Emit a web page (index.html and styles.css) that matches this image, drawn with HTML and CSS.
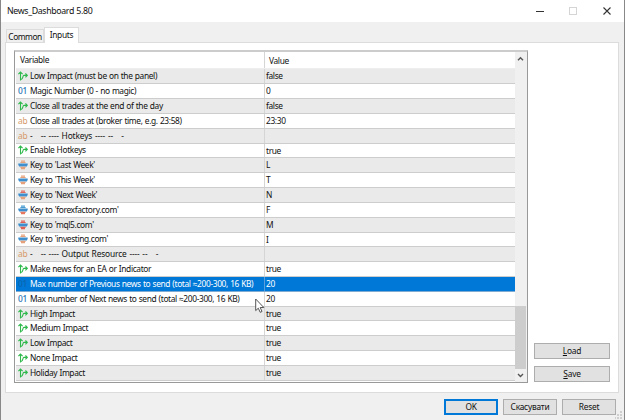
FILE: index.html
```html
<!DOCTYPE html>
<html lang="en">
<head>
  <meta charset="UTF-8">
  <meta name="viewport" content="width=device-width, initial-scale=1.0">
  <title>News_Dashboard 5.80</title>
  <link rel="stylesheet" href="styles.css">
</head>
<body>
  <svg class="defs">
    <symbol id="bool" viewBox="0 0 10 10">
      <path d="M2.5 9.5V1M.4 3.2L2.5 1.1 4.6 3.2M2.7 8.8C5.6 8.4 4.2 4.4 6 4.4H9.2M7.4 2.5L9.3 4.4 7.4 6.3" fill="none" stroke="#2fb94c" stroke-width="1.1"/>
    </symbol>
    <symbol id="enum" viewBox="0 0 10 10">
      <path class="enum-top" d="M3 1.2H7M2.4 2.5H7.6"/>
      <path class="enum-mid" d="M.3 4.5H9.7M1 5.5H9"/>
      <path class="enum-bottom" d="M2.4 7.3H7.6M3 8.6H7"/>
    </symbol>
  </svg>

  <div class="window">
    <div class="titlebar">
      <span class="title">News_Dashboard 5.80</span>
      <svg class="controls" width="80" height="10" viewBox="0 0 80 10">
        <path d="M1 5.5H9" stroke="#333"/>
        <rect x="34.5" y="1.5" width="7" height="7" fill="none" stroke="#d5d5d5"/>
        <path d="M68.5 1.5L75.5 8.5M75.5 1.5L68.5 8.5" stroke="#333" stroke-width="1.1"/>
      </svg>
    </div>

    <div class="tabs">
      <div class="tab">Common</div>
      <div class="tab active">Inputs</div>
    </div>

    <div class="page">
      <div class="list">
        <div class="rows">
          <div class="row header"><div class="name">Variable</div><div class="value">Value</div></div>
          <div class="row"><div class="name"><svg class="icon"><use href="#bool"/></svg>Low Impact (must be on the panel)</div><div class="value">false</div></div>
          <div class="row"><div class="name"><span class="icon int">01</span>Magic Number (0 - no magic)</div><div class="value">0</div></div>
          <div class="row"><div class="name"><svg class="icon"><use href="#bool"/></svg>Close all trades at the end of the day</div><div class="value">false</div></div>
          <div class="row"><div class="name"><span class="icon str">ab</span>Close all trades at (broker time, e.g. 23:58)</div><div class="value">23:30</div></div>
          <div class="row separator"><div class="name"><span class="icon str">ab</span>-&nbsp;&nbsp; -- ---- Hotkeys ---- --&nbsp;&nbsp; -</div><div class="value"></div></div>
          <div class="row"><div class="name"><svg class="icon"><use href="#bool"/></svg>Enable Hotkeys</div><div class="value">true</div></div>
          <div class="row"><div class="name"><svg class="icon"><use href="#enum"/></svg>Key to 'Last Week'</div><div class="value">L</div></div>
          <div class="row"><div class="name"><svg class="icon"><use href="#enum"/></svg>Key to 'This Week'</div><div class="value">T</div></div>
          <div class="row"><div class="name"><svg class="icon red-top"><use href="#enum"/></svg>Key to 'Next Week'</div><div class="value">N</div></div>
          <div class="row"><div class="name"><svg class="icon blue-top"><use href="#enum"/></svg>Key to 'forexfactory.com'</div><div class="value">F</div></div>
          <div class="row"><div class="name"><svg class="icon red"><use href="#enum"/></svg>Key to 'mql5.com'</div><div class="value">M</div></div>
          <div class="row"><div class="name"><svg class="icon"><use href="#enum"/></svg>Key to 'investing.com'</div><div class="value">I</div></div>
          <div class="row separator"><div class="name"><span class="icon str">ab</span>-&nbsp;&nbsp; -- ---- Output Resource ---- --&nbsp;&nbsp; -</div><div class="value"></div></div>
          <div class="row"><div class="name"><svg class="icon"><use href="#bool"/></svg>Make news for an EA or Indicator</div><div class="value">true</div></div>
          <div class="row selected"><div class="name"><span class="icon int">01</span>Max number of Previous news to send (total ≈200-300, 16 KB)</div><div class="value">20</div></div>
          <div class="row"><div class="name"><span class="icon int">01</span>Max number of Next news to send (total ≈200-300, 16 KB)</div><div class="value">20</div></div>
          <div class="row"><div class="name"><svg class="icon"><use href="#bool"/></svg>High Impact</div><div class="value">true</div></div>
          <div class="row"><div class="name"><svg class="icon"><use href="#bool"/></svg>Medium Impact</div><div class="value">true</div></div>
          <div class="row"><div class="name"><svg class="icon"><use href="#bool"/></svg>Low Impact</div><div class="value">true</div></div>
          <div class="row"><div class="name"><svg class="icon"><use href="#bool"/></svg>None Impact</div><div class="value">true</div></div>
          <div class="row"><div class="name"><svg class="icon"><use href="#bool"/></svg>Holiday Impact</div><div class="value">true</div></div>
        </div>
        <div class="scrollbar">
          <svg width="11" height="14" viewBox="0 0 11 14"><path d="M3 8.3L5.5 5.8 8 8.3" fill="none" stroke="#555" stroke-width="1.4"/></svg>
          <div class="thumb"></div>
          <svg width="11" height="13" viewBox="0 0 11 13"><path d="M3 5L5.5 7.5 8 5" fill="none" stroke="#555" stroke-width="1.4"/></svg>
        </div>
      </div>

      <div class="side">
        <button class="wide"><u>L</u>oad</button>
        <button class="wide"><u>S</u>ave</button>
      </div>
    </div>

    <div class="footer">
      <button class="default">OK</button>
      <button>Скасувати</button>
      <button>Reset</button>
    </div>

    <svg class="grip" width="8" height="8"><path d="M5 1h2M5 4h2M2 4h2M5 7h2M2 7h2M-1 7h2" stroke="#c4c4c4" stroke-width="1.5"/></svg>
    <svg class="cursor" width="10" height="16" viewBox="0 0 10 16"><path d="M.7 1V12.6L3.3 10.2 5.2 14.3 7 13.5 5.2 9.5H8.8Z" fill="#fff" stroke="#444" stroke-width=".9"/></svg>
  </div>
</body>
</html>
```
FILE: styles.css
```css
* {
    box-sizing: border-box;
}

body {
    margin: 0;
    font-family: "Noto Sans", sans-serif;
    font-size: 8.4px;
    letter-spacing: -0.36px;
    word-spacing: 0.4px;
    color: #111;
    overflow: hidden;
}

.defs {
    display: none;
}

.window {
    position: relative;
    width: 625px;
    height: 420px;
    background: #f0f0f0;
    border-left: 1px solid #888;
    border-right: 1px solid #888;
}

.titlebar {
    display: flex;
    justify-content: space-between;
    align-items: center;
    height: 22px;
    padding: 0 9px 0 6px;
    background: #fff;
}

.title {
    font-size: 8.8px;
}

.tabs {
    display: flex;
    align-items: flex-end;
    height: 21px;
    padding-left: 5px;
}

.tab {
    width: 38px;
    height: 14px;
    line-height: 14px;
    text-align: center;
    letter-spacing: -0.5px;
    border: 1px solid #dcdcdc;
    border-bottom: none;
}

.tab.active {
    width: 35px;
    height: 16px;
    background: #fff;
    letter-spacing: -0.29px;
}

.page {
    display: flex;
    justify-content: space-between;
    width: 614px;
    height: 351px;
    margin: -1px 0 0 4px;
    padding: 7px 8px 10px;
    background: #fff;
    border: 1px solid #dcdcdc;
}

.list {
    display: flex;
    width: 514px;
    height: 333px;
    border: 1px solid #999;
    border-top: 2px solid #ccc;
}

.rows {
    width: 500px;
    padding-left: 1px;
}

.row {
    display: flex;
    height: 14.83px;
    line-height: 14px;
    border-bottom: 1px solid #cdcdcd;
    white-space: pre;
}

.row:nth-child(even) {
    background: #eaeaea;
}

.row.header {
    height: 17.4px;
    line-height: 18px;
    border-bottom: 1px solid #eee;
}

.row.separator .name {
    letter-spacing: -0.14px;
    word-spacing: 0.7px;
}

.row.selected {
    background: #0078d7;
    border-bottom-color: #7fabd2;
    color: #fff;
}

.name {
    display: flex;
    align-items: center;
    width: 249px;
    padding-left: 2px;
    border-right: 1px solid #d5d5d5;
}

.selected .name {
    border-right-color: #5a9fdc;
}

.value {
    padding-left: 1px;
}

.header .name,
.header .value {
    padding-left: 4px;
}

.icon {
    flex: none;
    width: 10px;
    height: 10px;
    margin-right: 2px;
    line-height: 9px;
    letter-spacing: -0.2px;
}

.int {
    color: #2675b5;
    font-weight: 500;
}

.selected .int {
    color: #0b66ae;
}

.str {
    color: #d69a69;
}

.enum-top,
.enum-bottom {
    stroke: var(--bottom, #e5a17c);
    stroke-width: 1.2;
}

.enum-top {
    stroke: var(--top, #e5a17c);
}

.enum-mid {
    stroke: #3f8fce;
    stroke-width: 1.8;
}

.red-top {
    --top: #df6a60;
}

.blue-top {
    --top: #4b9bd0;
    --bottom: #e5785f;
}

.red {
    --top: #df5f55;
    --bottom: #df5f55;
}

.scrollbar {
    display: flex;
    flex-direction: column;
    width: 12px;
    padding-right: 1px;
    background: #f0f0f0;
}

.thumb {
    height: 63px;
    margin-top: auto;
    background: #cdcdcd;
}

.side {
    display: flex;
    flex-direction: column;
    justify-content: flex-end;
    gap: 7px;
}

button {
    width: 54px;
    height: 16px;
    padding: 0;
    font: inherit;
    letter-spacing: -0.25px;
    color: #111;
    line-height: 14px;
    background: #e1e1e1;
    border: 1px solid #adadad;
}

button.wide {
    width: 76px;
}

button.default {
    border: 2px solid #0078d7;
    line-height: 12px;
}

.footer {
    display: flex;
    justify-content: flex-end;
    gap: 5px;
    padding: 6px 8px 0 0;
}

.grip {
    position: absolute;
    right: 1px;
    bottom: 1px;
}

.cursor {
    position: absolute;
    left: 254px;
    top: 298px;
}
```
